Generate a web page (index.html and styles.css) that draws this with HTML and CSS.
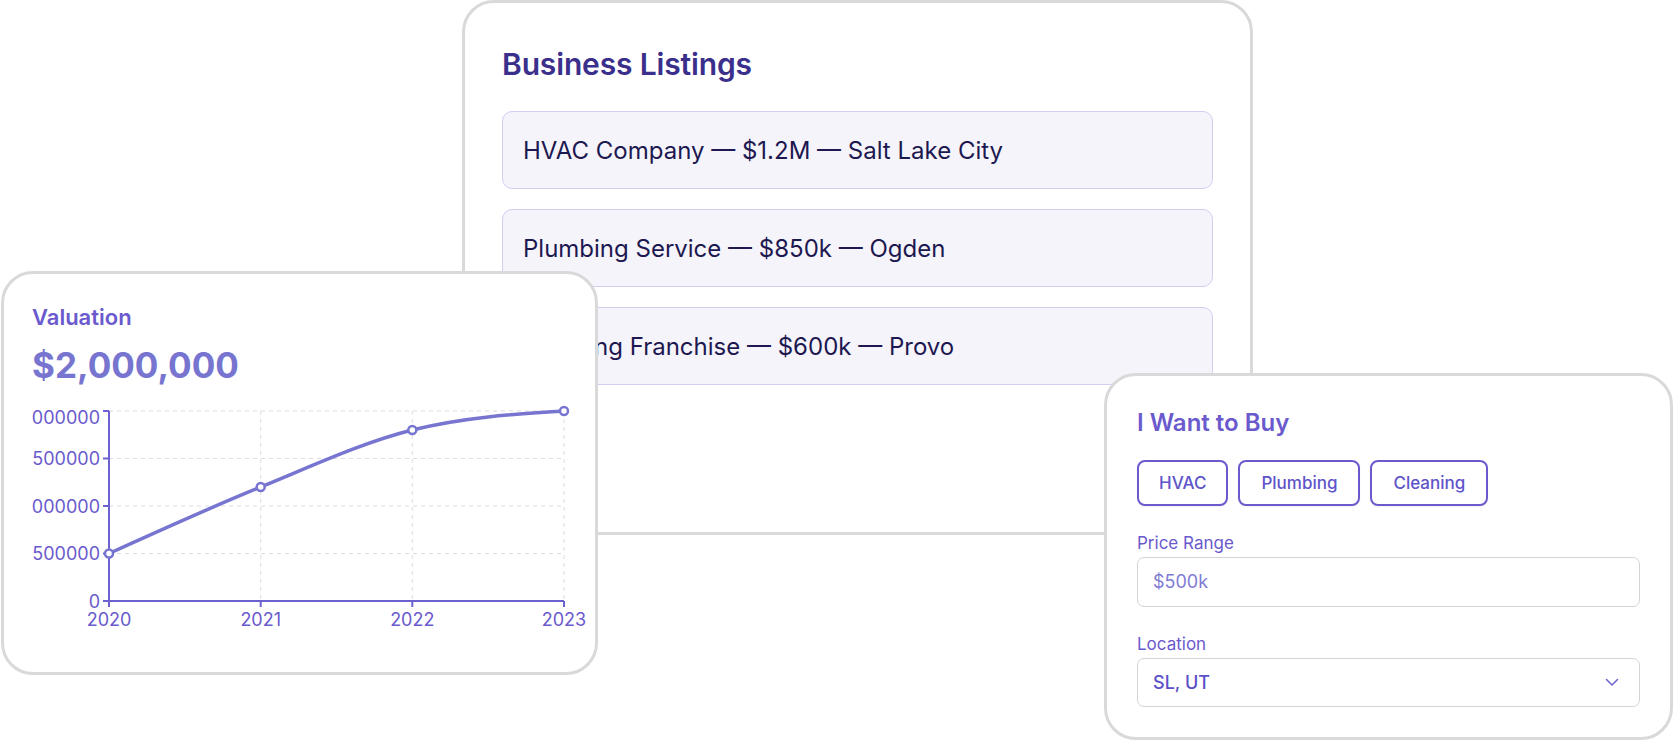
FILE: index.html
```html
<!DOCTYPE html>
<html lang="en">
<head>
<meta charset="utf-8">
<title>Business Listings</title>
<link rel="stylesheet" href="styles.css">
</head>
<body>
<div class="scene">
  <section class="card listings">
    <h2 class="listings-title">Business Listings</h2>
    <ul class="listing-list">
      <li class="listing">HVAC Company — $1.2M — Salt Lake City</li>
      <li class="listing">Plumbing Service — $850k — Ogden</li>
      <li class="listing">Cleaning Franchise — $600k — Provo</li>
    </ul>
  </section>

  <section class="card valuation">
    <div class="val-label">Valuation</div>
    <div class="val-amount">$2,000,000</div>
    <svg class="chart" width="560" height="245" viewBox="0 0 560 245">
      <g class="grid">
        <line x1="77" y1="16" x2="532" y2="16"/>
        <line x1="77" y1="63.5" x2="532" y2="63.5"/>
        <line x1="77" y1="111" x2="532" y2="111"/>
        <line x1="77" y1="158.5" x2="532" y2="158.5"/>
        <line x1="228.7" y1="16" x2="228.7" y2="206"/>
        <line x1="380.3" y1="16" x2="380.3" y2="206"/>
        <line x1="532" y1="16" x2="532" y2="206"/>
      </g>
      <g class="axis">
        <line x1="77" y1="16" x2="77" y2="206"/>
        <line x1="77" y1="206" x2="532" y2="206"/>
        <line x1="71" y1="16" x2="77" y2="16"/>
        <line x1="71" y1="63.5" x2="77" y2="63.5"/>
        <line x1="71" y1="111" x2="77" y2="111"/>
        <line x1="71" y1="158.5" x2="77" y2="158.5"/>
        <line x1="71" y1="206" x2="77" y2="206"/>
        <line x1="77" y1="206" x2="77" y2="212"/>
        <line x1="228.7" y1="206" x2="228.7" y2="212"/>
        <line x1="380.3" y1="206" x2="380.3" y2="212"/>
        <line x1="532" y1="206" x2="532" y2="212"/>
      </g>
      <g class="ticks-y">
        <text x="68" y="29">2000000</text>
        <text x="68" y="70">1500000</text>
        <text x="68" y="117.5">1000000</text>
        <text x="68" y="165">500000</text>
        <text x="68" y="212.5">0</text>
      </g>
      <g class="ticks-x">
        <text x="77" y="231">2020</text>
        <text x="228.7" y="231">2021</text>
        <text x="380.3" y="231">2022</text>
        <text x="532" y="231">2023</text>
      </g>
      <path class="line" d="M77,158.5 C127.57,135.54 178.13,112.59 228.7,92 C279.27,71.41 329.73,47.65 380.3,35 C430.87,22.34 481.43,19.17 532,16"/>
      <g class="dots">
        <circle cx="77" cy="158.5" r="4"/>
        <circle cx="228.7" cy="92" r="4"/>
        <circle cx="380.3" cy="35" r="4"/>
        <circle cx="532" cy="16" r="4"/>
      </g>
    </svg>
  </section>

  <section class="card buy">
    <h3 class="buy-title">I Want to Buy</h3>
    <div class="chips">
      <button class="chip">HVAC</button>
      <button class="chip">Plumbing</button>
      <button class="chip">Cleaning</button>
    </div>
    <label class="field-label">Price Range</label>
    <div class="field"><span class="field-placeholder">$500k</span></div>
    <label class="field-label">Location</label>
    <div class="field select">
      <span class="field-value">SL, UT</span>
      <svg class="chevron" width="14" height="9" viewBox="0 0 14 9"><path d="M1.5 1.5 L7 7 L12.5 1.5"/></svg>
    </div>
  </section>
</div>
</body>
</html>
```

FILE: styles.css
```css
* { box-sizing: border-box; }

html, body {
  margin: 0;
  padding: 0;
  background: #ffffff;
}

body {
  font-family: Inter, "Noto Sans", "Liberation Sans", sans-serif;
  overflow: hidden;
}

.scene {
  position: relative;
  width: 1674px;
  height: 741px;
}

.card {
  position: absolute;
  background: #ffffff;
  border: 3px solid #d9d9d9;
  border-radius: 32px;
}

/* Business listings window */
.listings {
  left: 462px;
  top: 0;
  width: 791px;
  height: 535px;
  padding: 43px 37px;
  display: flex;
  flex-direction: column;
  gap: 29px;
  z-index: 1;
}

.listings-title {
  margin: 0;
  font-size: 30px;
  line-height: 36px;
  font-weight: 600;
  color: #3b2f8c;
  letter-spacing: -0.15px;
}

.listing-list {
  list-style: none;
  margin: 0;
  padding: 0;
  display: flex;
  flex-direction: column;
  gap: 20px;
}

.listing {
  height: 78px;
  display: flex;
  align-items: center;
  padding: 0 20px;
  background: #f5f4fb;
  border: 1.5px solid #d3cdf2;
  border-radius: 10px;
  font-size: 24px;
  color: #1d1850;
}

/* Valuation window */
.valuation {
  left: 1px;
  top: 271px;
  width: 597px;
  height: 404px;
  padding: 30px 28px;
  display: flex;
  flex-direction: column;
  z-index: 2;
}

.val-label {
  font-size: 22px;
  line-height: 26px;
  font-weight: 600;
  color: #6a5acd;
}

.val-amount {
  margin-top: 14px;
  font-size: 35px;
  line-height: 42px;
  font-weight: 700;
  color: #7775cf;
}

.chart {
  margin-top: 9px;
  display: block;
  flex-shrink: 0;
  overflow: hidden;
}

.chart .grid line {
  stroke: #dcdcdc;
  stroke-width: 1;
  stroke-dasharray: 4 4;
}

.chart .axis line {
  stroke: #6b62d0;
  stroke-width: 2;
}

.chart text {
  font-family: Inter, "Noto Sans", sans-serif;
  font-size: 18px;
  fill: #6a5acd;
}

.chart .ticks-y text { text-anchor: end; }
.chart .ticks-x text { text-anchor: middle; }

.chart .line {
  fill: none;
  stroke: #7775cf;
  stroke-width: 3.5;
}

.chart .dots circle {
  fill: #ffffff;
  stroke: #7775cf;
  stroke-width: 2.5;
}

/* Buy window */
.buy {
  left: 1104px;
  top: 373px;
  width: 569px;
  height: 367px;
  padding: 32px 30px 30px;
  display: flex;
  flex-direction: column;
  z-index: 3;
}

.buy-title {
  margin: 0;
  font-size: 24px;
  line-height: 30px;
  font-weight: 600;
  color: #6a5acd;
}

.chips {
  margin-top: 22px;
  display: flex;
  gap: 10px;
}

.chip {
  font-family: inherit;
  font-size: 17px;
  line-height: 20px;
  font-weight: 500;
  color: #5e54c9;
  background: #ffffff;
  border: 2px solid #6a5acd;
  border-radius: 8px;
  padding: 11px 20px;
  box-shadow: 0 1px 2px rgba(0, 0, 0, 0.06);
}

.chip + .chip { padding: 11px 21px; }

.field-label {
  margin-top: 26px;
  font-size: 17px;
  line-height: 22px;
  color: #6a5acd;
}

.field-label + .field { margin-top: 3px; }

.field {
  height: 50px;
  border: 1.5px solid #d4d4d8;
  border-radius: 7px;
  padding: 0 15px;
  display: flex;
  align-items: center;
  justify-content: space-between;
  font-size: 18px;
}

.field-placeholder { color: #7f7bd4; }
.field-value { color: #5b50c8; font-weight: 500; }

.chevron path {
  fill: none;
  stroke: #6e67cf;
  stroke-width: 1.6;
  stroke-linecap: round;
  stroke-linejoin: round;
}

.select { padding-right: 20px; }
```
